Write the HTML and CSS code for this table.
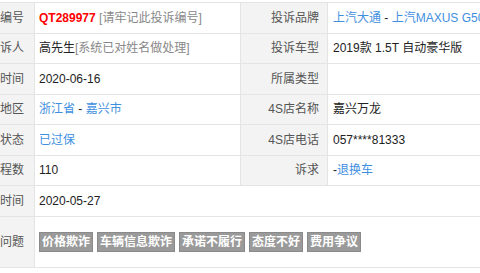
FILE: index.html
```html
<!DOCTYPE html>
<html lang="zh">
<head>
<meta charset="utf-8">
<link rel="stylesheet" href="styles.css">
</head>
<body>
<table class="info">
  <colgroup>
    <col class="c-label1">
    <col class="c-val1">
    <col class="c-label2">
    <col class="c-val2">
  </colgroup>
  <tr>
    <td class="lbl">投诉编号</td>
    <td class="val"><span class="code">QT289977</span> <span class="muted">[请牢记此投诉编号]</span></td>
    <td class="lbl">投诉品牌</td>
    <td class="val"><a class="lnk">上汽大通</a> - <a class="lnk">上汽MAXUS G50</a></td>
  </tr>
  <tr>
    <td class="lbl">投诉人</td>
    <td class="val">高先生<span class="muted">[系统已对姓名做处理]</span></td>
    <td class="lbl">投诉车型</td>
    <td class="val">2019款 1.5T 自动豪华版</td>
  </tr>
  <tr>
    <td class="lbl">购车时间</td>
    <td class="val">2020-06-16</td>
    <td class="lbl">所属类型</td>
    <td class="val"></td>
  </tr>
  <tr>
    <td class="lbl">所在地区</td>
    <td class="val"><a class="lnk">浙江省</a> - <a class="lnk">嘉兴市</a></td>
    <td class="lbl">4S店名称</td>
    <td class="val">嘉兴万龙</td>
  </tr>
  <tr>
    <td class="lbl">车辆状态</td>
    <td class="val"><a class="lnk">已过保</a></td>
    <td class="lbl">4S店电话</td>
    <td class="val">057****81333</td>
  </tr>
  <tr>
    <td class="lbl">行驶里程数</td>
    <td class="val">110</td>
    <td class="lbl">诉求</td>
    <td class="val">-<a class="lnk">退换车</a></td>
  </tr>
  <tr>
    <td class="lbl">投诉时间</td>
    <td class="val" colspan="3">2020-05-27</td>
  </tr>
  <tr class="tall">
    <td class="lbl">投诉问题</td>
    <td class="val" colspan="3">
      <div class="tags">
        <span class="tag">价格欺诈</span>
        <span class="tag">车辆信息欺诈</span>
        <span class="tag">承诺不履行</span>
        <span class="tag">态度不好</span>
        <span class="tag">费用争议</span>
      </div>
    </td>
  </tr>
</table>
</body>
</html>
```

FILE: styles.css
```css
html, body {
  margin: 0;
  padding: 0;
  background: #fff;
  overflow: hidden;
}
body {
  font-family: "Liberation Sans", Arial, "Noto Sans CJK SC", sans-serif;
  font-size: 12px;
  color: #222;
}
.info {
  border-collapse: collapse;
  table-layout: fixed;
  width: 620px;
  margin: 2px 0 0 -40px;
}
.c-label1 { width: 74px; }
.c-val1 { width: 206px; }
.c-label2 { width: 87px; }
.c-val2 { width: 253px; }
.info td {
  border: 1px solid #e4e4e4;
  height: 29.5px;
  padding: 0;
  white-space: nowrap;
  overflow: hidden;
  vertical-align: middle;
  line-height: 16px;
}
.info tr.tall td {
  height: 50px;
}
.lbl {
  background: #f3f3f3;
  color: #555;
  text-align: right;
  padding-right: 10px !important;
}
.info td.lbl:nth-child(3) {
  padding-right: 8px !important;
}
.val {
  padding-left: 4px !important;
}
.info td.val:nth-child(4) {
  padding-left: 5px !important;
}
.code {
  color: #f00;
  font-weight: bold;
}
.muted {
  color: #888;
}
.lnk {
  color: #3f8fdf;
  text-decoration: none;
}
.tags {
  display: flex;
  gap: 4px;
}
.tag {
  display: inline-block;
  background: #9a9a9a;
  border: 1px solid #8a8a8a;
  color: #fff;
  font-weight: bold;
  height: 18px;
  line-height: 18px;
  padding: 0 2px;
}
```
